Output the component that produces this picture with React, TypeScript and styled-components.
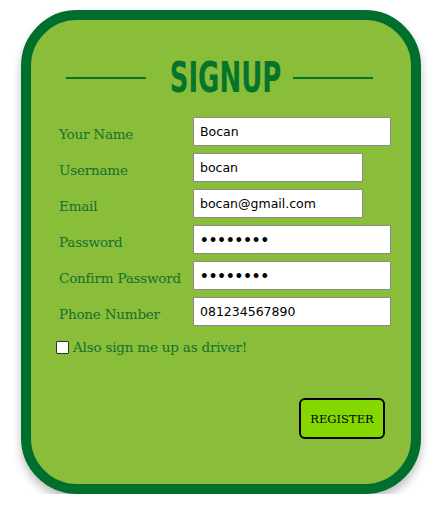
import React from "react";
import styled, { createGlobalStyle } from "styled-components";

const Global = createGlobalStyle`
  html, body { margin: 0; padding: 0; background: #ffffff; }
  body { font-family: "DejaVu Serif", serif; }
`;

const Card = styled.div`
  box-sizing: border-box;
  margin: 10px 0 0 21px;
  width: 400px;
  height: 484px;
  background: #8abd3a;
  border: 10px solid #006f2e;
  border-radius: 56px;
  box-shadow: 0 6px 10px rgba(0, 0, 0, 0.25);
  padding: 0 0 0 28px;
`;

const Header = styled.div`
  display: flex;
  align-items: center;
  margin: 34px 0 0 7px;
  height: 48px;
`;

const Rule = styled.div`
  width: 80px;
  height: 2px;
  background: #06752c;
`;

const Title = styled.h1`
  margin: 0 12px 0 24px;
  width: 111px;
  display: flex;
  justify-content: center;
  font-family: "DejaVu Sans Condensed", "DejaVu Sans", sans-serif;
  font-weight: 700;
  font-size: 38px;
  line-height: 48px;
  color: #06752c;
  white-space: nowrap;
  transform: scale(0.76, 1.1);
`;

const Form = styled.form`
  display: flex;
  flex-direction: column;
  gap: 7px;
  margin-top: 15px;
`;

const Row = styled.div`
  display: grid;
  grid-template-columns: 134px auto;
  align-items: center;
  height: 29px;
`;

const Label = styled.label`
  font-family: "DejaVu Serif", serif;
  font-size: 13.5px;
  color: #13722f;
  padding-top: 4px;
  white-space: nowrap;
  letter-spacing: -0.2px;
`;

const Input = styled.input<{ $w: number }>`
  box-sizing: border-box;
  width: ${(p) => p.$w}px;
  height: 29px;
  border: 1px solid #8a8a8a;
  background: #fff;
  padding: 0 6px;
  font-family: "DejaVu Sans", sans-serif;
  font-size: 12.5px;
  color: #000;
  outline: none;
  &[type="password"] { font-size: 13.5px; font-weight: 700; }
`;

const CheckRow = styled.label`
  display: flex;
  align-items: center;
  gap: 4px;
  margin: 13px 0 0 -3px;
  font-family: "DejaVu Serif", serif;
  font-size: 13.5px;
  color: #13722f;
  letter-spacing: -0.2px;
`;

const Check = styled.span`
  box-sizing: border-box;
  width: 13px;
  height: 13px;
  border: 1px solid #333;
  background: #fff;
  border-radius: 1px;
`;

const Footer = styled.div`
  display: flex;
  justify-content: flex-end;
  margin: 43px 26px 0 0;
`;

const Button = styled.button`
  box-sizing: border-box;
  width: 86px;
  height: 41px;
  background: #84d800;
  border: 2px solid #000;
  border-radius: 6px;
  font-family: "DejaVu Serif", serif;
  font-size: 11.5px;
  color: #000;
  padding: 0;
`;

const rows: { label: string; value: string; w: number; type?: string }[] = [
  { label: "Your Name", value: "Bocan", w: 198 },
  { label: "Username", value: "bocan", w: 170 },
  { label: "Email", value: "bocan@gmail.com", w: 170 },
  { label: "Password", value: "12345678", w: 198, type: "password" },
  { label: "Confirm Password", value: "12345678", w: 198, type: "password" },
  { label: "Phone Number", value: "081234567890", w: 198 },
];

export default function App() {
  return (
    <>
      <Global />
      <Card>
        <Header>
          <Rule />
          <Title>SIGNUP</Title>
          <Rule />
        </Header>
        <Form onSubmit={(e) => e.preventDefault()}>
          {rows.map((r) => (
            <Row key={r.label}>
              <Label>{r.label}</Label>
              <Input $w={r.w} type={r.type ?? "text"} defaultValue={r.value} />
            </Row>
          ))}
        </Form>
        <CheckRow>
          <Check />
          Also sign me up as driver!
        </CheckRow>
        <Footer>
          <Button type="button">REGISTER</Button>
        </Footer>
      </Card>
    </>
  );
}
